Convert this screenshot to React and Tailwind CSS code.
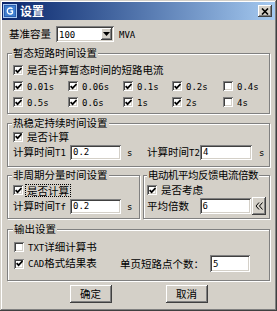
import React from "react";

const A = ({ children }) => (
  <span className="font-['DejaVu_Sans_Mono',monospace] text-[9px]">{children}</span>
);

const sunken =
  "shadow-[inset_1px_1px_0_#808080,inset_-1px_-1px_0_#ffffff,inset_2px_2px_0_#404040,inset_-2px_-2px_0_#d4d0c8]";
const raised =
  "shadow-[inset_-1px_-1px_0_#404040,inset_1px_1px_0_#ffffff,inset_-2px_-2px_0_#808080,inset_2px_2px_0_#d4d0c8]";

function Check({ checked }) {
  return (
    <span
      className={
        "flex h-[10px] w-[10px] shrink-0 items-center justify-center bg-white " + sunken
      }
    >
      {checked && (
        <svg width="7" height="7" viewBox="0 0 7 7">
          <path d="M0.6 3.1 L2.6 5.2 L6.5 1.1" fill="none" stroke="#000" strokeWidth="1.7" />
        </svg>
      )}
    </span>
  );
}

function CheckRow({ checked, children, className = "" }) {
  return (
    <div className={"flex items-center gap-[4px] " + className}>
      <Check checked={checked} />
      <span className="whitespace-nowrap">{children}</span>
    </div>
  );
}

function Field({ value, className = "" }) {
  return (
    <div className={"flex items-center bg-white pl-[3px] " + sunken + " " + className}>
      <A>{value}</A>
    </div>
  );
}

function Group({ title, className = "", legendClass = "", children }) {
  return (
    <fieldset
      className={
        "border border-[#808080] shadow-[inset_1px_1px_0_#ffffff,1px_1px_0_#ffffff] " + className
      }
    >
      <legend className={"ml-[-1px] bg-[#d4d0c8] px-[1px] leading-[12px] whitespace-nowrap " + legendClass}>
        {title}
      </legend>
      {children}
    </fieldset>
  );
}

function Icon() {
  return (
    <svg width="14" height="14" viewBox="0 0 14 14">
      <rect x="0.5" y="0.5" width="13" height="13" fill="#2a5fb0" stroke="#a8c8f0" />
      <rect x="2" y="2" width="10" height="10" fill="#3f7fd0" />
      <path d="M9.5 5 A3 3 0 1 0 9.5 9 L9.5 7 L7.5 7" fill="none" stroke="#ffffff" strokeWidth="1.3" />
    </svg>
  );
}

const opts = [
  ["0.01s", true],
  ["0.06s", true],
  ["0.1s", true],
  ["0.2s", true],
  ["0.4s", false],
  ["0.5s", true],
  ["0.6s", true],
  ["1s", true],
  ["2s", true],
  ["4s", false],
];

export default function App() {
  return (
    <div
      className={
        "h-[311px] w-[277px] overflow-hidden bg-[#d4d0c8] p-[2px] font-['Noto_Sans_CJK_SC',sans-serif] text-[10.5px] leading-[12px] text-black shadow-[inset_-1px_-1px_0_#404040,inset_1px_1px_0_#d4d0c8,inset_-2px_-2px_0_#808080,inset_2px_2px_0_#ffffff]"
      }
    >
      {/* title bar */}
      <div className="flex h-[18px] items-center bg-linear-to-r from-[#0a246a] to-[#a6caf0] pl-[1px] pr-[3px]">
        <Icon />
        <span className="ml-[3px] text-[12px] font-bold text-white">设置</span>
        <div
          className={"ml-auto flex h-[12px] w-[14px] items-center justify-center bg-[#d4d0c8] " + raised}
        >
          <svg width="8" height="7" viewBox="0 0 8 7">
            <path d="M1 0.5 L7 6.5 M7 0.5 L1 6.5" stroke="#000" strokeWidth="1.6" />
          </svg>
        </div>
      </div>

      <div className="px-[5px]">
        {/* base capacity */}
        <div className="mt-[6px] flex h-[16px] items-center pl-[2px]">
          <span>基准容量</span>
          <div className={"ml-[5px] flex h-[16px] w-[58px] items-center bg-white p-[2px] " + sunken}>
            <span className="flex-1 pl-[1px]">
              <A>100</A>
            </span>
            <div className={"flex h-[12px] w-[11px] items-center justify-center bg-[#d4d0c8] " + raised}>
              <svg width="7" height="4" viewBox="0 0 7 4">
                <path d="M0 0 L7 0 L3.5 4 Z" fill="#000" />
              </svg>
            </div>
          </div>
          <span className="ml-[5px]">
            <A>MVA</A>
          </span>
        </div>

        {/* group 1 */}
        <Group title="暂态短路时间设置" className="mt-[5px] px-[5px] pt-[3px] pb-[3px]">
          <CheckRow checked className="h-[16px]">
            是否计算暂态时间的短路电流
          </CheckRow>
          <div className="grid grid-cols-[55px_55px_49px_51px_1fr]">
            {opts.map(([t, c]) => (
              <CheckRow key={t} checked={c} className="h-[16px]">
                <A>{t}</A>
              </CheckRow>
            ))}
          </div>
        </Group>

        {/* group 2 */}
        <Group title="热稳定持续时间设置" className="mt-[3px] px-[5px] pb-[6px]">
          <CheckRow checked className="h-[15px]">
            是否计算
          </CheckRow>
          <div className="flex h-[16px] items-center">
            <div className="flex w-[134px] items-center">
              <span className="w-[57px] whitespace-nowrap">
                计算时间<A>T1</A>
              </span>
              <Field value="0.2" className="h-[15px] w-[51px]" />
              <span className="ml-[6px]">
                <A>s</A>
              </span>
            </div>
            <span className="w-[53px] whitespace-nowrap">
              计算时间<A>T2</A>
            </span>
            <Field value="4" className="h-[15px] w-[52px]" />
            <span className="ml-[7px]">
              <A>s</A>
            </span>
          </div>
        </Group>

        {/* group 3 */}
        <div className="mt-[2px] flex gap-[3px]">
          <Group title="非周期分量时间设置" className="w-[133px] shrink-0 px-[5px] pt-[1px] pb-[4px]">
            <div className="flex h-[16px] items-center gap-[2px]">
              <Check checked />
              <span className="border border-dotted border-black px-[1px] leading-[11px]">是否计算</span>
            </div>
            <div className="flex h-[16px] items-center">
              <span className="w-[57px] whitespace-nowrap">
                计算时间<A>Tf</A>
              </span>
              <Field value="0.2" className="h-[15px] w-[51px]" />
              <span className="ml-[6px]">
                <A>s</A>
              </span>
            </div>
          </Group>
          <Group
            title="电动机平均反馈电流倍数"
            className="min-w-0 flex-1 px-[3px] pt-[1px] pb-[4px]"
            legendClass="ml-[0px] tracking-[-0.5px]"
          >
            <CheckRow checked className="h-[16px]">
              是否考虑
            </CheckRow>
            <div className="flex h-[16px] items-center">
              <span className="w-[53px]">平均倍数</span>
              <Field value="6" className="h-[16px] w-[52px]" />
              <div
                className={
                  "ml-[1px] flex h-[18px] w-[14px] items-center justify-center bg-[#d4d0c8] " + raised
                }
              >
                <svg width="8" height="8" viewBox="0 0 8 8">
                  <path d="M4 0.5 L1 4 L4 7.5 M7.5 0.5 L4.5 4 L7.5 7.5" fill="none" stroke="#000" strokeWidth="1" />
                </svg>
              </div>
            </div>
          </Group>
        </div>

        {/* group 4 */}
        <Group title="输出设置" className="mt-[4px] px-[6px] pt-[4px] pb-[8px]">
          <CheckRow checked={false} className="h-[16px]">
            <A>TXT</A>详细计算书
          </CheckRow>
          <div className="flex h-[17px] items-center">
            <CheckRow checked className="w-[106px]">
              <A>CAD</A>格式结果表
            </CheckRow>
            <span className="whitespace-nowrap">单页短路点个数：</span>
            <Field value="5" className="ml-[6px] h-[17px] w-[40px]" />
          </div>
        </Group>

        {/* buttons */}
        <div className="mt-[4px] flex justify-center gap-[54px]">
          <div className={"flex h-[18px] w-[42px] items-center justify-center bg-[#d4d0c8] " + raised}>
            确定
          </div>
          <div className={"flex h-[18px] w-[42px] items-center justify-center bg-[#d4d0c8] " + raised}>
            取消
          </div>
        </div>
      </div>
    </div>
  );
}
